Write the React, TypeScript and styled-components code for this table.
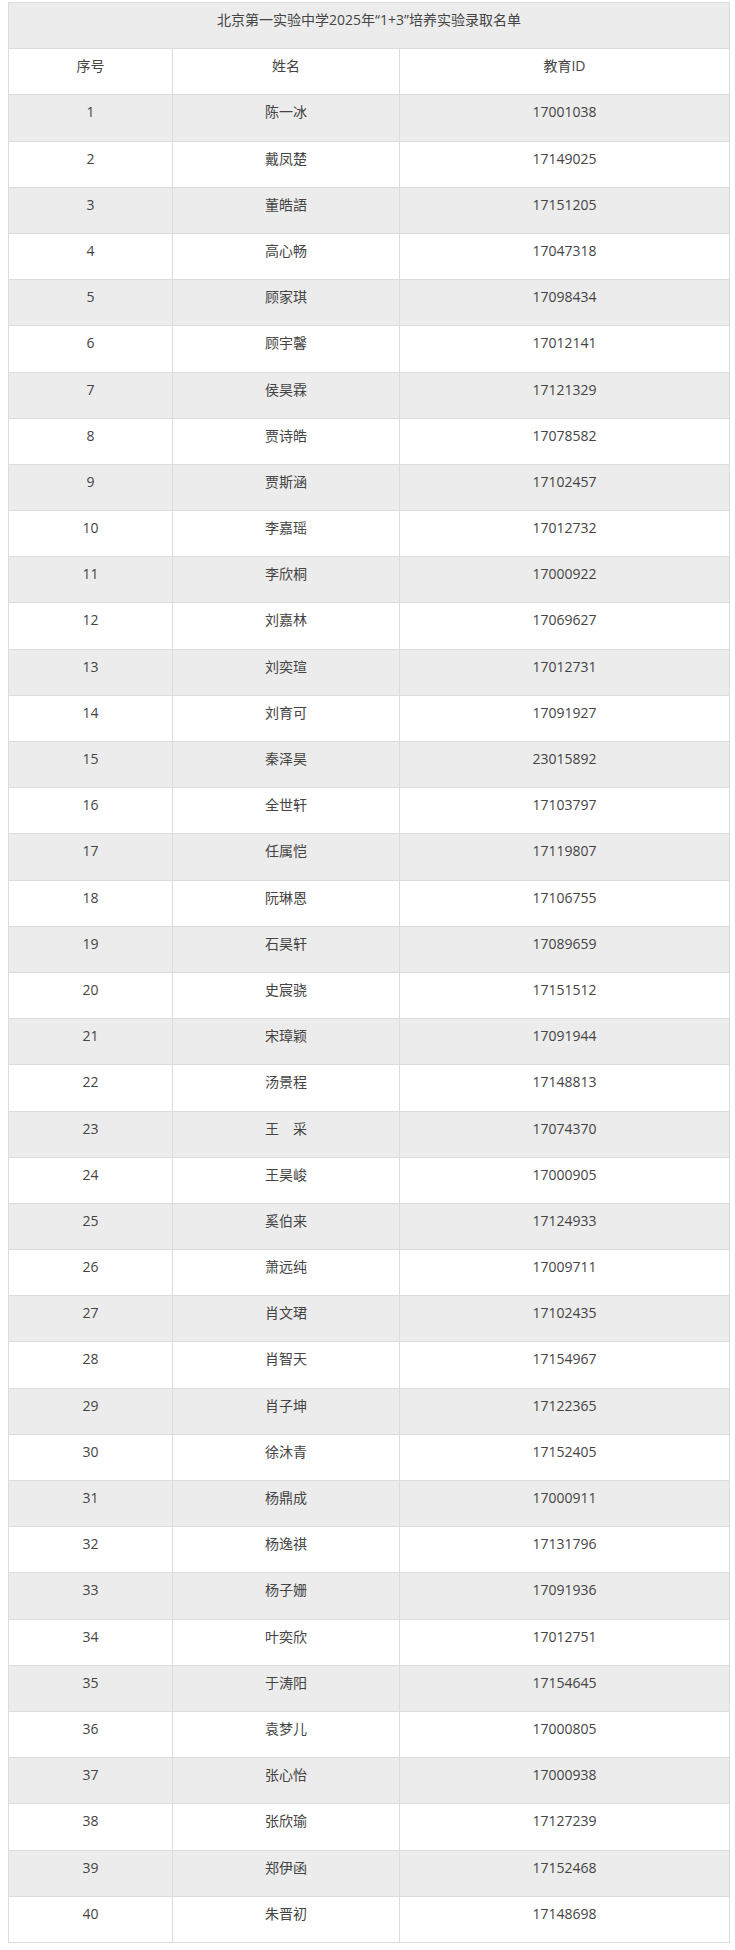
import React from "react";
import styled, { createGlobalStyle } from "styled-components";

type Student = {
  name: string;
  id: string;
};

const students: Student[] = [
  { name: "陈一冰", id: "17001038" },
  { name: "戴凤楚", id: "17149025" },
  { name: "董皓語", id: "17151205" },
  { name: "高心畅", id: "17047318" },
  { name: "顾家琪", id: "17098434" },
  { name: "顾宇馨", id: "17012141" },
  { name: "侯昊霖", id: "17121329" },
  { name: "贾诗皓", id: "17078582" },
  { name: "贾斯涵", id: "17102457" },
  { name: "李嘉瑶", id: "17012732" },
  { name: "李欣桐", id: "17000922" },
  { name: "刘嘉林", id: "17069627" },
  { name: "刘奕瑄", id: "17012731" },
  { name: "刘育可", id: "17091927" },
  { name: "秦泽昊", id: "23015892" },
  { name: "全世轩", id: "17103797" },
  { name: "任属恺", id: "17119807" },
  { name: "阮琳恩", id: "17106755" },
  { name: "石昊轩", id: "17089659" },
  { name: "史宸骁", id: "17151512" },
  { name: "宋璋颖", id: "17091944" },
  { name: "汤景程", id: "17148813" },
  { name: "王　采", id: "17074370" },
  { name: "王昊峻", id: "17000905" },
  { name: "奚伯来", id: "17124933" },
  { name: "萧远纯", id: "17009711" },
  { name: "肖文珺", id: "17102435" },
  { name: "肖智天", id: "17154967" },
  { name: "肖子坤", id: "17122365" },
  { name: "徐沐青", id: "17152405" },
  { name: "杨鼎成", id: "17000911" },
  { name: "杨逸祺", id: "17131796" },
  { name: "杨子姗", id: "17091936" },
  { name: "叶奕欣", id: "17012751" },
  { name: "于涛阳", id: "17154645" },
  { name: "袁梦儿", id: "17000805" },
  { name: "张心怡", id: "17000938" },
  { name: "张欣瑜", id: "17127239" },
  { name: "郑伊函", id: "17152468" },
  { name: "朱晋初", id: "17148698" },
];

export default function App() {
  return (
    <Page>
      <GlobalStyle />
      <Table>
        <colgroup>
          <col style={{ width: 164 }} />
          <col style={{ width: 227 }} />
          <col />
        </colgroup>
        <tbody>
          <Tr>
            <Td colSpan={3}>北京第一实验中学2025年“1+3”培养实验录取名单</Td>
          </Tr>
          <Tr>
            <Td>序号</Td>
            <Td>姓名</Td>
            <Td>教育ID</Td>
          </Tr>
          {students.map((s, i) => (
            <Tr key={s.id}>
              <Td>{i + 1}</Td>
              <Td>{s.name}</Td>
              <Td>{s.id}</Td>
            </Tr>
          ))}
        </tbody>
      </Table>
    </Page>
  );
}

const GlobalStyle = createGlobalStyle`
  body {
    margin: 0;
    background: #fff;
    font-family: "Open Sans", "Noto Sans CJK SC", sans-serif;
  }
`;

const Page = styled.div`
  padding: 2px 0 0 8px;
`;

const Table = styled.table`
  width: 722px;
  table-layout: fixed;
  border-collapse: collapse;
  border: 1px solid #dcdcdc;
  color: #444;
  font-size: 14px;
`;

const Tr = styled.tr`
  &:nth-child(odd) {
    background-color: #ececec;
  }
`;

const Td = styled.td`
  border: 1px solid #dcdcdc;
  padding: 5px 10px 16.2px;
  line-height: 24px;
  text-align: center;
  vertical-align: top;
`;
